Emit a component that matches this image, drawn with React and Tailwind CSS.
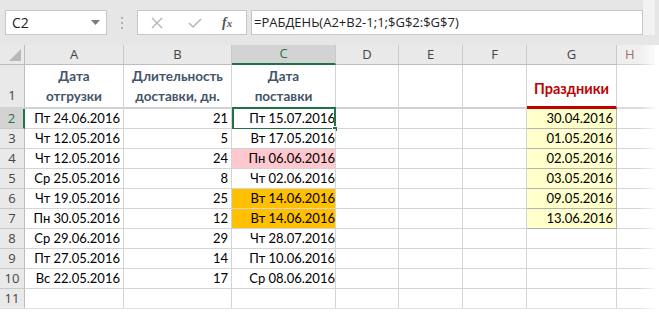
import React from "react";

const rows = [
  ["Пт 24.06.2016", "21", "Пт 15.07.2016", "", "30.04.2016"],
  ["Чт 12.05.2016", "5", "Вт 17.05.2016", "", "01.05.2016"],
  ["Чт 12.05.2016", "24", "Пн 06.06.2016", "pink", "02.05.2016"],
  ["Ср 25.05.2016", "8", "Чт 02.06.2016", "", "03.05.2016"],
  ["Чт 19.05.2016", "25", "Вт 14.06.2016", "orange", "09.05.2016"],
  ["Пн 30.05.2016", "12", "Вт 14.06.2016", "orange", "13.06.2016"],
  ["Ср 29.06.2016", "29", "Чт 28.07.2016", "", ""],
  ["Пт 27.05.2016", "14", "Пт 10.06.2016", "", ""],
  ["Вс 22.05.2016", "17", "Ср 08.06.2016", "", ""],
  ["", "", "", "", ""],
];

const cellFont = { fontFamily: "Lato, 'Liberation Sans', sans-serif" };

function ColHead({ children, sel }) {
  return (
    <div
      className={
        "flex items-center justify-center border-r border-[#c9c9c9] text-[13px] " +
        (sel
          ? "bg-[#d3d3d3] text-[#217346] border-b-2 border-b-[#217346]"
          : "bg-[#e9e9e9] text-[#444] border-b border-b-[#bdbdbd]")
      }
      style={{ fontFamily: "'Open Sans', 'Noto Sans', sans-serif" }}
    >
      {children}
    </div>
  );
}

function RowHead({ n, sel, tall }) {
  return (
    <div
      className={
        "flex justify-center border-b text-[13px] " +
        (tall ? "items-end pb-[2px] border-b-2 border-b-[#cfd3d6] " : "items-center border-b-[#c9c9c9] ") +
        (sel
          ? "bg-[#d3d3d3] text-[#217346] border-r-2 border-r-[#217346]"
          : "bg-[#e9e9e9] text-[#444] border-r border-r-[#bdbdbd]")
      }
      style={{ fontFamily: "'Open Sans', 'Noto Sans', sans-serif" }}
    >
      {n}
    </div>
  );
}

export default function App() {
  return (
    <div className="w-[659px] h-[314px] overflow-hidden bg-white relative select-none">
      {/* Formula bar area */}
      <div className="h-[45px] bg-[#e6e6e6] flex items-start pt-[10px] pl-[5px]">
        <div
          className="w-[102px] h-[25px] bg-white border border-[#c6c6c6] flex items-center justify-between pl-[6px] pr-[6px] text-[14px] text-[#222]"
          style={{ fontFamily: "'Open Sans', 'Noto Sans', sans-serif" }}
        >
          <span>C2</span>
          <svg width="9" height="6" viewBox="0 0 9 6">
            <path d="M0 0 L9 0 L4.5 5 Z" fill="#7a7a7a" />
          </svg>
        </div>
        <div className="w-[30px] h-[25px] flex flex-col items-center justify-center gap-[3px]">
          <div className="w-[2px] h-[2px] bg-[#b0b0b0]" />
          <div className="w-[2px] h-[2px] bg-[#b0b0b0]" />
          <div className="w-[2px] h-[2px] bg-[#b0b0b0]" />
        </div>
        <div className="w-[110px] h-[25px] bg-white border border-[#c6c6c6] flex items-center">
          <svg width="12" height="12" viewBox="0 0 12 12" className="ml-[13px]">
            <path d="M1 1 L11 11 M11 1 L1 11" stroke="#b4b4b4" strokeWidth="1.4" />
          </svg>
          <svg width="14" height="12" viewBox="0 0 14 12" className="ml-[25px]">
            <path d="M1 6 L5 10 L13 2" stroke="#b4b4b4" strokeWidth="1.5" fill="none" />
          </svg>
          <span
            className="ml-[20px] text-[14px] italic text-[#555] font-semibold"
            style={{ fontFamily: "'Liberation Serif', serif" }}
          >
            f<span className="text-[11px]">x</span>
          </span>
        </div>
        <div
          className="ml-[4px] w-[392px] h-[25px] bg-white border border-[#c6c6c6] flex items-center pl-[2px] text-[13px] text-[#222]"
          style={{ fontFamily: "'Open Sans', 'Noto Sans', sans-serif" }}
        >
          =РАБДЕНЬ(A2+B2-1;1;$G$2:$G$7)
        </div>
        <div className="w-[12px] h-[35px] -mt-[10px] bg-[#f2f2f2]" />
      </div>

      {/* Grid */}
      <div
        className="grid grid-cols-[25px_99px_108px_104px_63px_64px_64px_90px_38px] grid-rows-[20px_44px_repeat(10,20px)]"
        style={cellFont}
      >
        {/* header row */}
        <div className="bg-[#e9e9e9] border-r border-b border-[#bdbdbd] flex items-end justify-end pr-[3px] pb-[3px]">
          <svg width="12" height="12" viewBox="0 0 12 12">
            <path d="M12 0 L12 12 L0 12 Z" fill="#b9b9b9" />
          </svg>
        </div>
        <ColHead>A</ColHead>
        <ColHead>B</ColHead>
        <ColHead sel>C</ColHead>
        <ColHead>D</ColHead>
        <ColHead>E</ColHead>
        <ColHead>F</ColHead>
        <ColHead>G</ColHead>
        <div
          className="bg-[#efefef] border-b border-b-[#d0d0d0] flex items-center pl-[8px] text-[13px] text-[#a07070]"
          style={{ fontFamily: "'Open Sans', 'Noto Sans', sans-serif" }}
        >
          H
        </div>

        {/* row 1 */}
        <RowHead n="1" tall />
        {[
          ["Дата", "отгрузки"],
          ["Длительность", "доставки, дн."],
          ["Дата", "поставки"],
        ].map((t, i) => (
          <div
            key={i}
            className="border-r border-[#d4d4d4] border-b-2 border-b-[#cfd3d6] flex flex-col items-center justify-end pb-[1px] font-bold text-[13.5px] leading-[20px] text-[#44546a]"
          >
            <span>{t[0]}</span>
            <span>{t[1]}</span>
          </div>
        ))}
        <div className="border-r border-[#d4d4d4] border-b-2 border-b-[#cfd3d6]" />
        <div className="border-r border-[#d4d4d4] border-b-2 border-b-[#cfd3d6]" />
        <div className="border-r border-[#d4d4d4] border-b-2 border-b-[#cfd3d6]" />
        <div className="border-r border-[#d4d4d4] border-b-[3px] border-b-[#c00000] flex items-center justify-center pt-[6px] font-bold text-[14.5px] text-[#c00000]">
          Праздники
        </div>
        <div className="border-b-2 border-b-[#d8dadc]" />

        {rows.map((r, i) => {
          const n = i + 2;
          const cBg =
            r[3] === "pink" ? "bg-[#ffc7ce]" : r[3] === "orange" ? "bg-[#ffc000]" : "bg-white";
          return (
            <React.Fragment key={n}>
              <RowHead n={n} sel={n === 2} />
              <div className="border-r border-b border-[#d4d4d4] flex items-center justify-end pr-[3px] text-[13px] text-black">
                {r[0]}
              </div>
              <div className="border-r border-b border-[#d4d4d4] flex items-center justify-end pr-[3px] text-[13px] text-black">
                {r[1]}
              </div>
              <div
                className={
                  "relative border-r border-b border-[#d4d4d4] flex items-center justify-end pr-[0px] text-[13px] text-black " +
                  cBg
                }
              >
                {r[2]}
                {n === 2 && (
                  <>
                    <div className="absolute left-0 top-[-2px] w-[104px] h-[23px] border-2 border-[#217346]" />
                    <div className="absolute left-[100px] top-[17px] w-[6px] h-[6px] bg-[#217346] border border-white" />
                  </>
                )}
              </div>
              <div className="border-r border-b border-[#d4d4d4]" />
              <div className="border-r border-b border-[#d4d4d4]" />
              <div className="border-r border-b border-[#d4d4d4]" />
              {r[4] ? (
                <div className="border-r border-b border-[#b2b2b2] bg-[#ffffcc] flex items-center justify-end pr-[3px] text-[13px] text-black">
                  {r[4]}
                </div>
              ) : (
                <div className="border-r border-b border-[#d4d4d4]" />
              )}
              <div className="border-b border-[#d4d4d4]" />
            </React.Fragment>
          );
        })}
      </div>

      {/* right fade */}
      <div className="absolute right-0 top-[45px] w-[20px] h-[269px] bg-gradient-to-r from-transparent to-white" />
      {/* bottom fade */}
      <div className="absolute left-0 bottom-0 w-full h-[8px] bg-gradient-to-b from-transparent to-white" />
    </div>
  );
}
